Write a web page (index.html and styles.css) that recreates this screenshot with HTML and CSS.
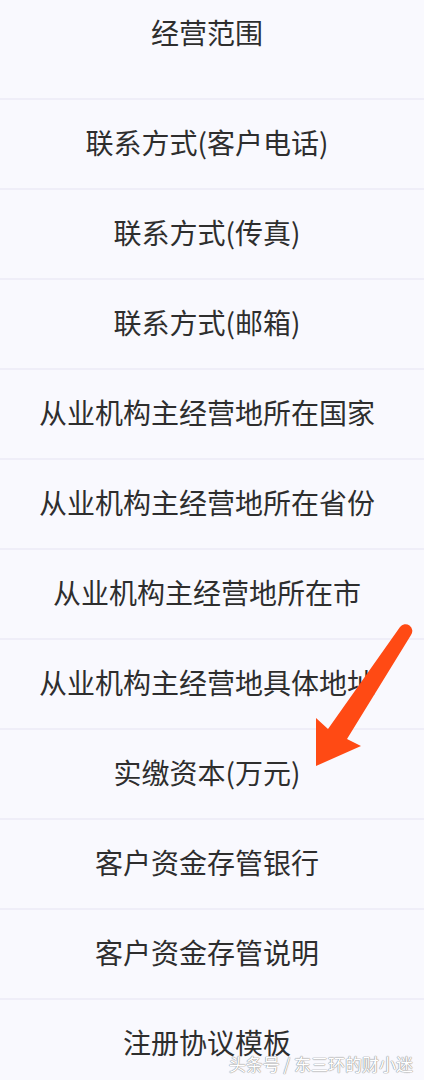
FILE: index.html
```html
<!DOCTYPE html>
<html lang="zh">
<head>
<meta charset="utf-8">
<link rel="stylesheet" href="styles.css">
</head>
<body>
<div class="page">
  <ul class="list">
    <li class="row first">经营范围</li>
    <li class="row">联系方式(客户电话)</li>
    <li class="row">联系方式(传真)</li>
    <li class="row">联系方式(邮箱)</li>
    <li class="row">从业机构主经营地所在国家</li>
    <li class="row">从业机构主经营地所在省份</li>
    <li class="row">从业机构主经营地所在市</li>
    <li class="row">从业机构主经营地具体地址</li>
    <li class="row">实缴资本(万元)</li>
    <li class="row">客户资金存管银行</li>
    <li class="row">客户资金存管说明</li>
    <li class="row">注册协议模板</li>
  </ul>
  <svg class="arrow" width="424" height="1080" viewBox="0 0 424 1080" aria-hidden="true">
    <path d="M 400 627 L 328 729 L 316 718 L 316 766 L 361 746 L 347 739 L 411 635 A 6.5 6.5 0 0 0 400 627 Z" fill="#ff4a14"/>
  </svg>
  <div class="watermark">头条号 / 东三环的财小迷</div>
</div>
</body>
</html>
```
FILE: styles.css
```css
html, body {
  margin: 0;
  padding: 0;
  background: #f9f9fe;
}
.page {
  position: relative;
  width: 424px;
  height: 1080px;
  overflow: hidden;
  font-family: "Noto Sans CJK SC", "Noto Sans", sans-serif;
}
.list {
  list-style: none;
  margin: 0;
  padding: 0;
}
.row {
  box-sizing: border-box;
  height: 90px;
  padding: 0 10px 5px 0;
  display: flex;
  align-items: center;
  justify-content: center;
  border-bottom: 2px solid #efeef8;
  font-size: 28px;
  line-height: 40px;
  color: #2e2e2e;
  white-space: nowrap;
}
.row.first {
  height: 100px;
  align-items: flex-start;
  padding-top: 12px;
}
.arrow {
  position: absolute;
  left: 0;
  top: 0;
}
.watermark {
  position: absolute;
  right: 11px;
  top: 1052px;
  font-size: 17px;
  line-height: 24px;
  color: #ffffff;
  text-shadow: 0 0 1px #999, 0 0 1px #999, 0 0 1px #999;
  white-space: nowrap;
}
```
